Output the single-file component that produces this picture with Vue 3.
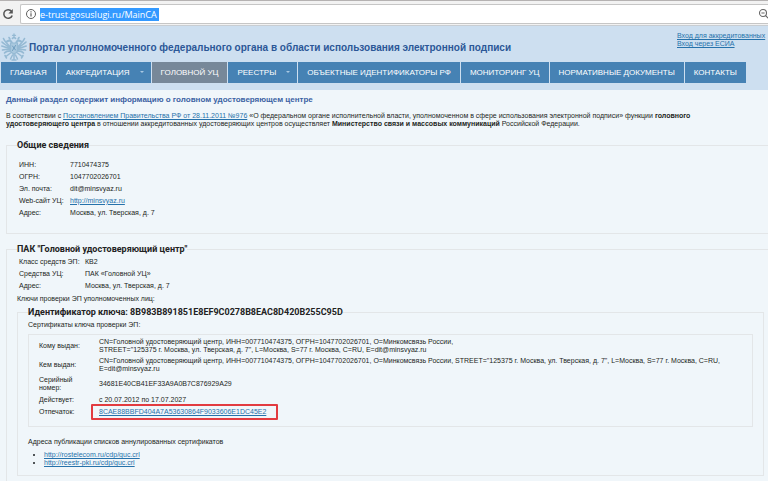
<script setup>
const menu = [
  { label: 'ГЛАВНАЯ' },
  { label: 'АККРЕДИТАЦИЯ', sub: true },
  { label: 'ГОЛОВНОЙ УЦ', active: true },
  { label: 'РЕЕСТРЫ', sub: true },
  { label: 'ОБЪЕКТНЫЕ ИДЕНТИФИКАТОРЫ РФ' },
  { label: 'МОНИТОРИНГ УЦ' },
  { label: 'НОРМАТИВНЫЕ ДОКУМЕНТЫ' },
  { label: 'КОНТАКТЫ' },
]
const general = [
  { name: 'ИНН:', value: '7710474375' },
  { name: 'ОГРН:', value: '1047702026701' },
  { name: 'Эл. почта:', value: 'dit@minsvyaz.ru' },
  { name: 'Web-сайт УЦ:', value: 'http://minsvyaz.ru', link: true },
  { name: 'Адрес:', value: 'Москва, ул. Тверская, д. 7' },
]
const complex = [
  { name: 'Класс средств ЭП:', value: 'КВ2' },
  { name: 'Средства УЦ:', value: 'ПАК «Головной УЦ»' },
  { name: 'Адрес:', value: 'Москва, ул. Тверская, д. 7' },
]
const lists = ['http://rostelecom.ru/cdp/guc.crl', 'http://reestr-pki.ru/cdp/guc.crl']
</script>

<template>
  <div class="page">
    <div class="toolbar">
      <button class="reload" aria-label="Обновить">
        <svg viewBox="0 0 12 12"><path d="M9.6 3.4A4.3 4.3 0 1 0 10.2 7.4" fill="none" stroke="#555" stroke-width="1.5" /><path d="M10.8 1v4.4H6.4z" fill="#555" /></svg>
      </button>
      <div class="address">
        <svg class="info" viewBox="0 0 12 12"><circle cx="6" cy="6" r="4.5" fill="none" stroke="#606060" stroke-width="1" /><path d="M6 5.3v3.2M6 3.3v1.2" stroke="#606060" stroke-width="1.2" /></svg>
        <span class="url">e-trust.gosuslugi.ru/MainCA</span>
        <svg class="lens" viewBox="0 0 10 12"><circle cx="5" cy="5" r="3.5" fill="none" stroke="#666" stroke-width="1.1" /><path d="M3.4 5h3.2M7.6 7.6L11 11" stroke="#666" stroke-width="1.2" /></svg>
      </div>
    </div>

    <header>
      <div class="brand">
        <svg class="emblem" viewBox="0 0 26 28" fill="none" stroke="#94b9d3" stroke-linecap="round">
          <path d="M13 1v4M11.5 2.3h3M11.3 5.5q1.7-2 3.4 0" stroke-width="1.3" />
          <path d="M8 4.5l1 1.6M18 4.5l-1 1.6" stroke-width="1.6" />
          <path d="M6 8.5L8 7.500q2.500 0 3 3M20 8.500L18 7.500q-2.500 0-3 3" stroke-width="2" />
          <path d="M9.5 14Q4 9 2.500 5.500M9.500 15Q3 11 1 9M9.500 16Q4 14 .8 13M9.500 17Q4 16 1.500 17M9.500 18Q5 18 3.500 20M16.500 14Q22 9 23.500 5.500M16.500 15Q23 11 25 9M16.500 16Q22 14 25.200 13M16.500 17Q22 16 24.500 17M16.500 18Q21 18 22.500 20" stroke-width="1.6" />
          <path d="M9.5 10h7v8q-.5 2-3.5 3q-3-1-3.5-3z" fill="#a9c8de" stroke-width="1.2" />
          <path d="M11.5 13l3 4M14.5 12.5l-3 5" stroke="#6f9dbf" stroke-width="1" />
          <path d="M9.5 20L5 23.5M4 22.5l1.500 2.500M16.500 20L21 23.500M22 22.500L20.500 25M13 21v5.500M11.500 22L9.500 26M14.500 22l2 4M11 27h4" stroke-width="1.5" />
        </svg>
        <h1>Портал уполномоченного федерального органа в области использования электронной подписи</h1>
        <div class="login">
          <a href="#">Вход для аккредитованных</a>
          <a href="#">Вход через ЕСИА</a>
        </div>
      </div>
      <nav>
        <a v-for="m in menu" :key="m.label" href="#" :class="{ active: m.active }">{{ m.label }}<i v-if="m.sub"></i></a>
      </nav>
    </header>

    <main>
      <h2>Данный раздел содержит информацию о головном удостоверяющем центре</h2>
      <p class="intro">
        В соответствии с <a href="#">Постановлением Правительства РФ от 28.11.2011 №976</a> «О федеральном органе исполнительной власти, уполномоченном в сфере использования электронной подписи» функции <b>головного<br>удостоверяющего центра</b> в отношении аккредитованных удостоверяющих центров осуществляет <b>Министерство связи и массовых коммуникаций</b> Российской Федерации.
      </p>

      <fieldset class="outer general">
        <legend>Общие сведения</legend>
        <table>
          <tr v-for="r in general" :key="r.name">
            <th>{{ r.name }}</th>
            <td><a v-if="r.link" href="#">{{ r.value }}</a><template v-else>{{ r.value }}</template></td>
          </tr>
        </table>
      </fieldset>

      <fieldset class="outer complex">
        <legend>ПАК "Головной удостоверяющий центр"</legend>
        <table class="wide">
          <tr v-for="r in complex" :key="r.name">
            <th>{{ r.name }}</th>
            <td>{{ r.value }}</td>
          </tr>
        </table>
        <p class="keys">Ключи проверки ЭП уполномоченных лиц:</p>

        <fieldset class="key">
          <legend>Идентификатор ключа: 8B983B891851E8EF9C0278B8EAC8D420B255C95D</legend>
          <p>Сертификаты ключа проверки ЭП:</p>
          <div class="cert">
            <table>
              <tr>
                <th>Кому выдан:</th>
                <td>CN=Головной удостоверяющий центр, ИНН=007710474375, ОГРН=1047702026701, O=Минкомсвязь России,<br>STREET="125375 г. Москва, ул. Тверская, д. 7", L=Москва, S=77 г. Москва, C=RU, E=dit@minsvyaz.ru</td>
              </tr>
              <tr>
                <th>Кем выдан:</th>
                <td>CN=Головной удостоверяющий центр, ИНН=007710474375, ОГРН=1047702026701, O=Минкомсвязь России, STREET="125375 г. Москва, ул. Тверская, д. 7", L=Москва, S=77 г. Москва, C=RU,<br>E=dit@minsvyaz.ru</td>
              </tr>
              <tr>
                <th>Серийный<br>номер:</th>
                <td>34681E40CB41EF33A9A0B7C876929A29</td>
              </tr>
              <tr>
                <th>Действует:</th>
                <td>с 20.07.2012 по 17.07.2027</td>
              </tr>
              <tr>
                <th>Отпечаток:</th>
                <td><a class="print" href="#">8CAE88BBFD404A7A53630864F9033606E1DC45E2</a></td>
              </tr>
            </table>
          </div>
          <p class="crl">Адреса публикации списков аннулированных сертификатов</p>
          <ul>
            <li v-for="l in lists" :key="l"><a href="#">{{ l }}</a></li>
          </ul>
        </fieldset>
      </fieldset>
    </main>
  </div>
</template>

<style>
body { background: #f0f6fa; }
</style>

<style scoped>
* { box-sizing: border-box; }
.page { font: 7px/8px "Liberation Sans", Arial, sans-serif; color: #1c1f22; white-space: nowrap; overflow: hidden; }
a { color: #2672ab; }
p { margin: 0; }
.toolbar { display: flex; align-items: center; height: 26px; padding-top: 2px; background: #f2f2f2; border-top: 1px solid #b5b2b2; border-bottom: 1px solid #c8cdd2; }
.reload { display: flex; width: 20px; padding: 0 0 0 2px; border: 0; background: none; }
.reload svg { width: 12px; height: 12px; }
.address { flex: 1; display: flex; align-items: center; height: 20px; padding-left: 4px; background: #fff; border: 1px solid #c6c6c6; border-right: 0; border-radius: 2px 0 0 2px; }
.info { width: 12px; height: 12px; margin-right: 3px; }
.url { font: 9px/13px "Open Sans", sans-serif; padding-right: 2px; background: #3399ff; color: #fff; }
.lens { width: 10px; height: 12px; margin-left: auto; }
header { padding: 1px 0 7px 1px; background: #cddff0; }
.brand { display: flex; align-items: center; height: 35px; }
.emblem { width: 26px; height: 28px; margin-top: 4px; }
h1 { margin: 6px 0 0 2px; font-size: 10px; line-height: 12px; color: #2b5797; }
.login { display: flex; flex-direction: column; align-items: flex-start; width: 91px; margin-left: auto; margin-bottom: 14px; align-self: flex-end; }
nav { display: flex; gap: 1px; }
nav a { display: flex; align-items: center; height: 21px; padding: 0 9px; background: #4682b4; color: #fff; font-size: 8px; text-decoration: none; }
nav a.active { background: #778899; }
nav i { margin: 0 -2px 2px 10px; border: 2px solid transparent; border-top-color: #a9c8e2; border-bottom: 0; }
main { margin-left: 1px; padding: 5px 0 0 5px; background: #f0f6fa; }
h2 { margin: 0 0 7px; font-size: 8px; line-height: 10px; color: #3b61a3; }
fieldset { min-width: 0; margin: 0; border: 1px solid #e3e6e8; }
legend { padding: 0; font: bold 9px/10px Roboto, "Liberation Sans", sans-serif; color: #222; }
.outer { border-right: 0; padding: 0 4px 0 10px; }
.general { margin-top: 12px; padding-top: 8px; padding-bottom: 15px; }
.complex { margin-top: 10px; padding-top: 1px; padding-bottom: 6px; border-bottom: 0; }
table { border-spacing: 0; }
th, td { height: 12px; padding: 2px 0 1px; text-align: left; font-weight: normal; vertical-align: middle; }
th { width: 53px; padding-left: 2px; }
.wide th { width: 68px; }
.keys { margin: 4px 0; }
.key { padding: 4px 10px 8px; }
.cert { margin-top: 5px; padding: 1px 8px 9px; border: 1px solid #e3e6e8; }
.cert th { width: 62px; min-width: 62px; }
.print { position: relative; }
.print::after { content: ""; position: absolute; inset: -4px -12px -5px -8px; border: 2px solid #e23b40; border-radius: 1px; }
.crl { margin-top: 11px; }
ul { margin: 5px 0 0; padding-left: 16px; }
</style>
